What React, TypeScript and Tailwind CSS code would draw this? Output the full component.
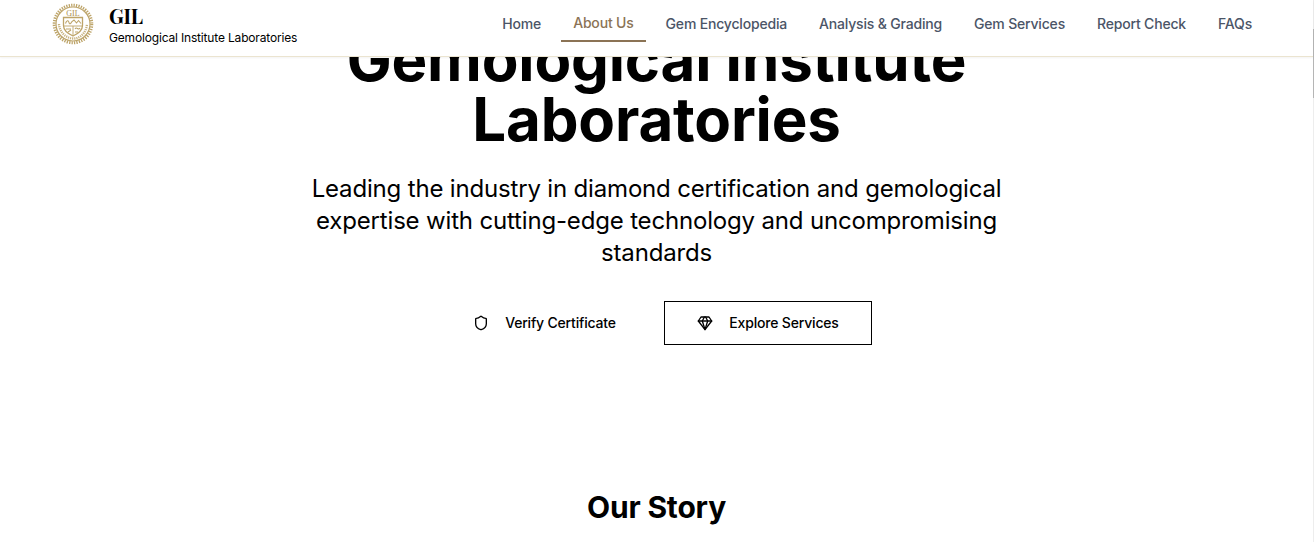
import React from "react";
import { Shield } from "lucide-react";

const links = [
  "Home",
  "About Us",
  "Gem Encyclopedia",
  "Analysis & Grading",
  "Gem Services",
  "Report Check",
  "FAQs",
];

function Seal() {
  return (
    <svg viewBox="0 0 42 42" className="h-[42px] w-[42px]" fill="none" stroke="#bda469">
      <circle cx="21" cy="21" r="18.8" strokeWidth="3" strokeDasharray="1.3 1.16" />
      <circle cx="21" cy="21" r="17" strokeWidth="1.2" />
      <text x="21" y="12.6" textAnchor="middle" fontSize="8" fontFamily="Liberation Serif, serif" fill="#a88c4c" stroke="none">
        GIL
      </text>
      <path d="M11.500 14.500h19v8c0 5-4 8-9.500 10.500C15.500 30.500 11.500 27.500 11.500 22.500z" strokeWidth="1.3" />
      <path d="M21 23v9.500M11.500 23h19" strokeWidth="0.9" />
      <path d="M13.500 20.500c1-3.500 3-3.500 3.500-1s2 1 3-1l2-1.500 2.500 3 2-2.500 2.500 3M14 26h5M23 26c2-3 3 2 5-1M16 29l3-2M23 29h3" strokeWidth="1.1" />
      <path d="M7 21c.5 8 6.500 14 14 14.500S34.500 29 35 21" strokeWidth="2.300" strokeDasharray="1.200 0.900" opacity="0.85" />
    </svg>
  );
}

function Gem() {
  return (
    <svg
      viewBox="0 0 24 24"
      className="h-4 w-4"
      fill="none"
      stroke="currentColor"
      strokeWidth="2"
      strokeLinecap="round"
      strokeLinejoin="round"
    >
      <path d="M6 3h12l4 6-10 13L2 9Z" />
      <path d="M11 3 8 9l4 13 4-13-3-6" />
      <path d="M2 9h20" />
    </svg>
  );
}

export default function App() {
  return (
    <div className="relative h-[542px] overflow-hidden bg-white font-['Inter',sans-serif] text-black">
      <div className="flex h-full">
        <div className="flex h-full min-w-0 flex-1 flex-col">
          <header className="relative z-10 flex h-[57px] shrink-0 items-start justify-between border-b border-[#ebe4d0] bg-white pr-[49px] pl-[52px] shadow-xs">
            <div className="flex items-start gap-[15px] pt-[3px]">
              <Seal />
              <div className="pt-px">
                <div className="font-['Playfair_Display','Liberation_Serif',serif] text-[20px] leading-[23px] font-bold tracking-[-0.2px]">
                  GIL
                </div>
                <div className="mt-px text-xs leading-5 tracking-[-0.17px]">Gemological Institute Laboratories</div>
              </div>
            </div>
            <nav className="flex gap-2 pt-[6px] text-sm font-medium tracking-[-0.182px] text-[#4b5567]">
              {links.map((label) =>
                label === "About Us" ? (
                  <a key={label} className="h-9 border-b-2 border-[#8b7355] px-3 leading-[34px] text-[#8b7355]">
                    {label}
                  </a>
                ) : (
                  <a key={label} className="h-9 px-3 leading-9">
                    {label}
                  </a>
                ),
              )}
            </nav>
          </header>
          <main className="-mt-7 flex flex-col items-center text-center">
            <h1 className="max-w-3xl text-6xl leading-none font-bold tracking-[-0.17px]">
              Gemological Institute Laboratories
            </h1>
            <p className="mt-6 max-w-[704px] text-2xl leading-8 tracking-[-0.17px]">
              Leading the industry in diamond certification and gemological expertise with cutting-edge technology and
              uncompromising standards
            </p>
            <div className="mt-8 flex gap-4 text-sm font-medium tracking-[-0.18px]">
              <button className="flex h-11 w-[207px] items-center justify-center gap-4">
                <Shield size={16} />
                Verify Certificate
              </button>
              <button className="flex h-11 w-[208px] items-center justify-center gap-4 border border-black">
                <Gem />
                Explore Services
              </button>
            </div>
            <h2 className="mt-36 text-3xl leading-9 font-bold tracking-[-0.17px]">Our Story</h2>
          </main>
        </div>
        <div className="w-px bg-[#ededed] pt-[29px]">
          <div className="h-[69px] bg-[#b5b5b5]" />
        </div>
      </div>
    </div>
  );
}
